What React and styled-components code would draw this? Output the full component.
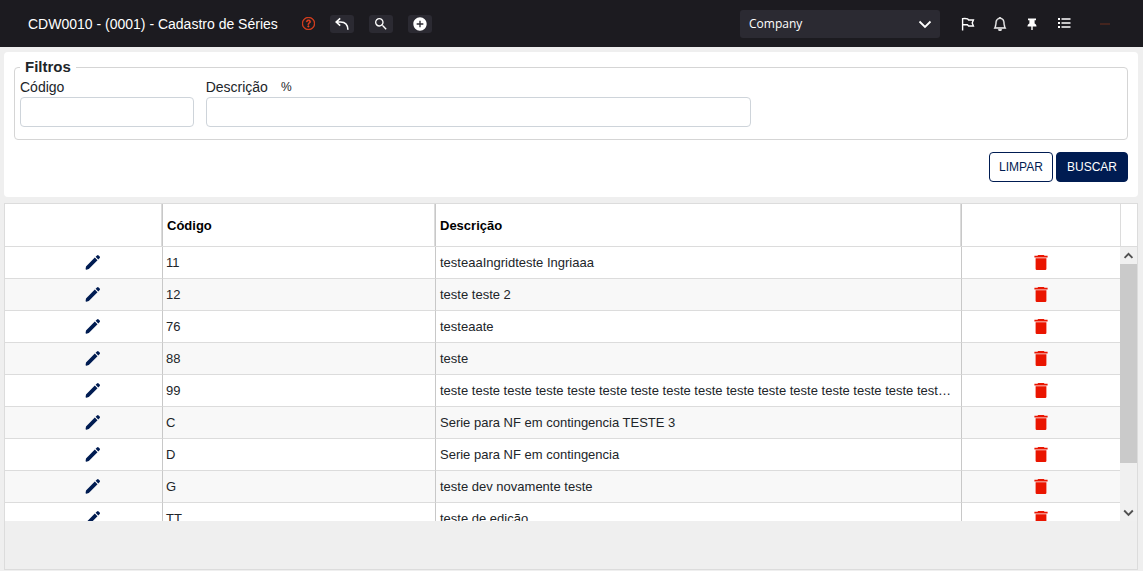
import React, { useRef } from "react";
import styled, { createGlobalStyle } from "styled-components";
import { BsQuestionCircle, BsBell } from "react-icons/bs";
import { MdSearch, MdAddCircle } from "react-icons/md";

const GlobalStyle = createGlobalStyle`
  * {
    box-sizing: border-box;
  }

  body {
    margin: 0;
    background: #efefef;
    color: #212529;
    font-family: "Liberation Sans", Arial, sans-serif;
    font-size: 14px;
  }

  button,
  input,
  select {
    font-family: inherit;
  }
`;

const Page = styled.div`
  display: flex;
  flex-direction: column;
  height: 100vh;
  min-height: 480px;
`;

const TopBar = styled.header`
  display: flex;
  align-items: center;
  flex: none;
  height: 47px;
  padding: 0 30px 0 28px;
  background: #1c1b20;
  color: white;
`;

const PageTitle = styled.h1`
  margin: 0 23px 0 0;
  font-size: 14px;
  font-weight: normal;
  white-space: nowrap;
`;

const Tools = styled.div`
  display: flex;
  align-items: center;
  gap: ${props => props.$gap};
`;

const ToolButton = styled.button`
  display: flex;
  align-items: center;
  justify-content: center;
  width: 24px;
  height: 18px;
  padding: 0;
  border: 0;
  border-radius: 3px;
  background: #2b2a32;
  color: white;
  cursor: pointer;
`;

const PlainButton = styled.button`
  display: flex;
  align-items: center;
  justify-content: center;
  width: 16px;
  height: 16px;
  padding: 0;
  border: 0;
  background: none;
  color: ${props => props.$color || "white"};
  cursor: pointer;
`;

const HelpButton = styled(PlainButton)`
  margin-right: 13px;
`;

const UserButton = styled(PlainButton)`
  margin-left: 25px;
`;

const CompanyBox = styled.div`
  display: flex;
  align-items: center;
  width: 200px;
  height: 28px;
  margin: 0 20px 0 auto;
  padding-right: 8px;
  border-radius: 3px;
  background: #2b2a32;
`;

const CompanySelect = styled.select`
  flex: 1;
  height: 28px;
  padding: 0 9px;
  border: 0;
  background: none;
  appearance: none;
  color: white;
  font-family: "Open Sans", "Noto Sans", sans-serif;
  font-size: 12px;
`;

const FilterPanel = styled.form`
  flex: none;
  margin: 5px 5px 6px 4px;
  padding: 7px 10px 15px;
  border-radius: 4px;
  background: white;
`;

const Filters = styled.fieldset`
  margin: 0 0 12px;
  padding: 1px 5px 12px;
  border: 1px solid #d5d5d5;
  border-radius: 4px;
`;

const FiltersTitle = styled.legend`
  padding: 0 5px;
  font-size: 15px;
  font-weight: bold;
  line-height: 16px;
`;

const FieldGrid = styled.div`
  display: grid;
  grid-template-columns: repeat(12, 1fr);
  column-gap: 12px;
`;

const Field = styled.div`
  grid-column: span ${props => props.$span};
`;

const FieldLabel = styled.label`
  display: flex;
  align-items: center;
  gap: 13px;
  height: 21px;
`;

const Wildcard = styled.span`
  font-size: 12px;
`;

const TextBox = styled.input`
  display: block;
  width: 100%;
  height: 30px;
  padding: 0 8px;
  border: 1px solid #ced4da;
  border-radius: 4px;
  background: white;
  font-size: 14px;
`;

const Actions = styled.div`
  display: flex;
  justify-content: flex-end;
  gap: 3px;
`;

const ActionButton = styled.button`
  width: ${props => props.$width};
  height: 30px;
  padding: 0;
  border: 1px solid #001c52;
  border-radius: 4px;
  background: ${props => (props.$primary ? "#001c52" : "white")};
  color: ${props => (props.$primary ? "white" : "#001c52")};
  font-size: 12px;
  cursor: pointer;
`;

const Grid = styled.section`
  display: flex;
  flex-direction: column;
  flex: 1;
  min-height: 0;
  margin: 0 5px 1px 4px;
  border: 1px solid #dcdcdc;
`;

const GridHeader = styled.div`
  display: flex;
  flex: none;
  border-bottom: 1px solid #dcdcdc;
  background: white;
`;

const HeaderCorner = styled.div`
  flex: none;
  width: 17px;
  border-left: 1px solid #dcdcdc;
`;

const GridBody = styled.div`
  display: flex;
  flex: 1;
  min-height: 0;
`;

const Viewport = styled.div`
  flex: 1;
  overflow-y: auto;
  background: white;
  scrollbar-width: none;
`;

const GridFooter = styled.div`
  flex: none;
  height: 48px;
`;

const Table = styled.table`
  width: 100%;
  table-layout: fixed;
  border-collapse: separate;
  border-spacing: 0;
`;

const Col = styled.col`
  width: ${props => props.$width};
`;

const HeadCell = styled.th`
  height: 42px;
  padding: 0 4px;
  color: black;
  font-size: 13px;
  text-align: left;

  &:not(:last-child) {
    border-right: 1px solid #dcdcdc;
  }

  & + & {
    border-left: 1px solid #c8c8c8;
  }
`;

const Row = styled.tr`
  &:nth-child(even) {
    background: #f8f8f8;
  }
`;

const Cell = styled.td`
  height: 32px;
  padding: ${props => props.$padding || "0 9px 0 4px"};
  border-bottom: 1px solid #dcdcdc;
  font-size: 13px;
  overflow: hidden;
  text-overflow: ellipsis;
  white-space: nowrap;

  & + & {
    border-left: 1px solid #c8c8c8;
  }
`;

const IconButton = styled.button`
  display: block;
  width: 18px;
  height: 18px;
  margin: 0 auto;
  padding: 0;
  border: 0;
  background: none;
  color: ${props => props.$color};
  cursor: pointer;

  svg {
    display: block;
  }
`;

const ScrollBar = styled.div`
  display: flex;
  flex-direction: column;
  flex: none;
  width: 17px;
  background: #f0f0f0;
`;

const ScrollArrow = styled.button`
  display: flex;
  align-items: center;
  justify-content: center;
  height: 17px;
  padding: 0;
  border: 0;
  background: none;
  color: #505050;
`;

const ScrollTrack = styled.div`
  flex: 1;
`;

const ScrollThumb = styled.div`
  height: 83%;
  background: #cacaca;
`;

const series = [
  { code: "11", description: "testeaaIngridteste Ingriaaa" },
  { code: "12", description: "teste teste 2" },
  { code: "76", description: "testeaate" },
  { code: "88", description: "teste" },
  {
    code: "99",
    description:
      "teste teste teste teste teste teste teste teste teste teste teste teste teste teste teste teste teste teste"
  },
  { code: "C", description: "Serie para NF em contingencia TESTE 3" },
  { code: "D", description: "Serie para NF em contingencia" },
  { code: "G", description: "teste dev novamente teste" },
  { code: "TT", description: "teste de edição" }
];

function Chevron({ size, width, up }) {
  return (
    <svg width={size} height={size} viewBox="0 0 14 14" fill="none">
      <path
        d={up ? "M2 10 L7 5 L12 10" : "M1.5 4.5 L7 10 L12.5 4.5"}
        stroke="currentColor"
        strokeWidth={width}
      />
    </svg>
  );
}

function BackIcon() {
  return (
    <svg width="14" height="14" viewBox="0 0 14 14" fill="none">
      <path
        d="M5.2 1.4 L1.2 5 L5.2 8.6 M1.2 5 H5.6 C10.2 5 12.8 8 12.9 12.8"
        stroke="currentColor"
        strokeWidth="1.6"
      />
    </svg>
  );
}

function FlagIcon() {
  return (
    <svg width="14" height="14" viewBox="0 0 14 14" fill="none">
      <path
        d="M1.6 13.4 V1.6 C3.4 1.4 5.2 1.4 6.6 1.8 L7.6 3 H12.4 L11.2 6 L12.4 9 H7.6 L6.4 7.8 H1.6"
        stroke="currentColor"
        strokeWidth="1.4"
      />
    </svg>
  );
}

function PinIcon() {
  return (
    <svg width="12" height="14" viewBox="0 0 12 14" fill="currentColor">
      <path d="M2 1.4 H10 V3.2 H8.6 V6.6 C9.9 7.2 10.5 8.2 10.5 9.6 H6.7 V13 H5.3 V9.6 H1.5 C1.5 8.2 2.1 7.2 3.4 6.6 V3.2 H2 Z" />
    </svg>
  );
}

function ListIcon() {
  return (
    <svg width="14" height="14" viewBox="0 0 14 14" fill="currentColor">
      <path d="M1 1 H3 V3 H1 Z M1 5 H3 V7 H1 Z M1 9 H3 V11 H1 Z M4.5 1.2 H13.5 V2.8 H4.5 Z M4.5 5.2 H13.5 V6.8 H4.5 Z M4.5 9.2 H13.5 V10.8 H4.5 Z" />
    </svg>
  );
}

function DashIcon() {
  return (
    <svg width="10" height="2" viewBox="0 0 10 2" fill="currentColor">
      <path d="M0 0.5 H10 V1.5 H0 Z" />
    </svg>
  );
}

function PencilIcon() {
  return (
    <svg width="18" height="18" viewBox="0 0 18 18" fill="currentColor">
      <path d="M2 12.4 L10.8 3.6 L13.5 6.3 L4.8 15 L2.4 15.8 Q1.6 15.8 1.6 15 Z M11.6 2.8 L13 1.4 Q13.8 0.7 14.6 1.4 L15.7 2.5 Q16.4 3.3 15.7 4.1 L14.3 5.5 Z" />
    </svg>
  );
}

function TrashIcon() {
  return (
    <svg width="18" height="18" viewBox="0 0 18 18" fill="currentColor">
      <path d="M6.2 1 H11.8 L12.6 1.8 H15.6 V3.4 H2.4 V1.8 H5.4 Z M3.6 4.2 H14.4 V14.8 Q14.4 16 13.2 16 H4.8 Q3.6 16 3.6 14.8 Z" />
    </svg>
  );
}

function Columns() {
  return (
    <colgroup>
      <Col $width="157px" />
      <Col $width="273px" />
      <Col />
      <Col $width="159px" />
    </colgroup>
  );
}

function SeriesGrid() {
  const viewport = useRef(null);
  const scroll = top => viewport.current.scrollBy({ top });

  return (
    <Grid>
      <GridHeader>
        <Table>
          <Columns />
          <thead>
            <tr>
              <HeadCell aria-label="Editar" />
              <HeadCell>Código</HeadCell>
              <HeadCell>Descrição</HeadCell>
              <HeadCell aria-label="Excluir" />
            </tr>
          </thead>
        </Table>
        <HeaderCorner />
      </GridHeader>
      <GridBody>
        <Viewport ref={viewport}>
          <Table>
            <Columns />
            <tbody>
              {series.map(item => (
                <Row key={item.code}>
                  <Cell $padding="0 4px 0 22px">
                    <IconButton $color="#001c52" aria-label="Editar">
                      <PencilIcon />
                    </IconButton>
                  </Cell>
                  <Cell $padding="0 4px 0 3px">{item.code}</Cell>
                  <Cell>{item.description}</Cell>
                  <Cell $padding="0 4px">
                    <IconButton $color="#ea1500" aria-label="Excluir">
                      <TrashIcon />
                    </IconButton>
                  </Cell>
                </Row>
              ))}
            </tbody>
          </Table>
        </Viewport>
        <ScrollBar>
          <ScrollArrow aria-label="Subir" onClick={() => scroll(-32)}>
            <Chevron size={11} width={2.4} up />
          </ScrollArrow>
          <ScrollTrack>
            <ScrollThumb />
          </ScrollTrack>
          <ScrollArrow aria-label="Descer" onClick={() => scroll(32)}>
            <Chevron size={11} width={2.4} />
          </ScrollArrow>
        </ScrollBar>
      </GridBody>
      <GridFooter />
    </Grid>
  );
}

function App() {
  return (
    <Page>
      <GlobalStyle />
      <TopBar>
        <PageTitle>CDW0010 - (0001) - Cadastro de Séries</PageTitle>
        <HelpButton $color="#e8431f" aria-label="Ajuda">
          <BsQuestionCircle size={13} strokeWidth={0.6} />
        </HelpButton>
        <Tools $gap="15px">
          <ToolButton aria-label="Voltar">
            <BackIcon />
          </ToolButton>
          <ToolButton aria-label="Pesquisar">
            <MdSearch size={16} />
          </ToolButton>
          <ToolButton aria-label="Adicionar">
            <MdAddCircle size={16} />
          </ToolButton>
        </Tools>
        <CompanyBox>
          <CompanySelect aria-label="Empresa">
            <option>Company</option>
          </CompanySelect>
          <Chevron size={14} width={1.8} />
        </CompanyBox>
        <Tools $gap="16px">
          <PlainButton aria-label="Marcadores">
            <FlagIcon />
          </PlainButton>
          <PlainButton aria-label="Notificações">
            <BsBell size={14} strokeWidth={0.5} />
          </PlainButton>
          <PlainButton aria-label="Fixar">
            <PinIcon />
          </PlainButton>
          <PlainButton aria-label="Menu">
            <ListIcon />
          </PlainButton>
        </Tools>
        <UserButton $color="#6b2f1c" aria-label="Usuário">
          <DashIcon />
        </UserButton>
      </TopBar>
      <FilterPanel onSubmit={event => event.preventDefault()}>
        <Filters>
          <FiltersTitle>Filtros</FiltersTitle>
          <FieldGrid>
            <Field $span={2}>
              <FieldLabel htmlFor="codigo">Código</FieldLabel>
              <TextBox id="codigo" type="text" />
            </Field>
            <Field $span={6}>
              <FieldLabel htmlFor="descricao">
                Descrição <Wildcard>%</Wildcard>
              </FieldLabel>
              <TextBox id="descricao" type="text" />
            </Field>
          </FieldGrid>
        </Filters>
        <Actions>
          <ActionButton type="reset" $width="64px">
            LIMPAR
          </ActionButton>
          <ActionButton type="submit" $width="72px" $primary>
            BUSCAR
          </ActionButton>
        </Actions>
      </FilterPanel>
      <SeriesGrid />
    </Page>
  );
}

export default App;
